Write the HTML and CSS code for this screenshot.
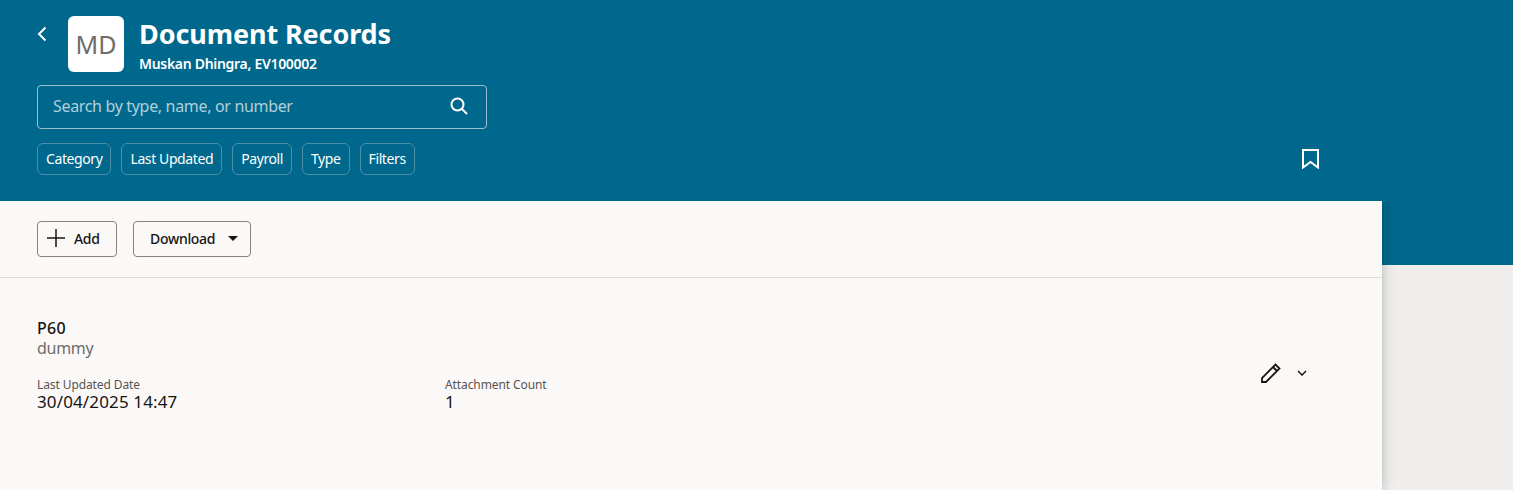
FILE: index.html
```html
<!DOCTYPE html>
<html lang="en">
<head>
    <meta charset="UTF-8">
    <meta name="viewport" content="width=device-width, initial-scale=1.0">
    <title>Document Records</title>
    <link rel="stylesheet" href="styles.css">
</head>
<body>
    <header class="banner">
        <div class="title-row">
            <button class="back" aria-label="Back">
                <svg width="10" height="16" viewBox="0 0 10 16"><path d="M8.500 1.500 2 8l6.500 6.500" fill="none" stroke="#fff" stroke-width="2"/></svg>
            </button>
            <div class="avatar">MD</div>
            <div class="title-text">
                <h1>Document Records</h1>
                <p>Muskan Dhingra, EV100002</p>
            </div>
        </div>
        <div class="search">
            <span>Search by type, name, or number</span>
            <svg width="18" height="18" viewBox="0 0 18 18"><circle cx="7.500" cy="7.500" r="6" fill="none" stroke="#fff" stroke-width="2"/><path d="m12 12 5 5" stroke="#fff" stroke-width="2"/></svg>
        </div>
        <div class="filter-row">
            <div class="chips">
                <span class="chip">Category</span>
                <span class="chip">Last Updated</span>
                <span class="chip">Payroll</span>
                <span class="chip">Type</span>
                <span class="chip">Filters</span>
            </div>
            <svg width="17" height="20" viewBox="0 0 17 20"><path d="M1 1h15v17.500L8.500 13 1 18.500z" fill="none" stroke="#fff" stroke-width="2"/></svg>
        </div>
    </header>

    <main class="card">
        <div class="toolbar">
            <button class="btn btn-add">
                <svg width="18" height="18" viewBox="0 0 18 18"><path d="M9 0v18M0 9h18" stroke="#161513" stroke-width="1.500"/></svg>
                Add
            </button>
            <button class="btn btn-download">
                Download
                <svg width="10" height="5" viewBox="0 0 10 5"><path d="M0 0h10L5 5z" fill="#161513"/></svg>
            </button>
        </div>
        <div class="record">
            <div class="record-info">
                <div class="record-name">P60</div>
                <div class="record-desc">dummy</div>
                <div class="fields">
                    <div class="field">
                        <div class="field-label">Last Updated Date</div>
                        <div class="field-value">30/04/2025 14:47</div>
                    </div>
                    <div class="field">
                        <div class="field-label">Attachment Count</div>
                        <div class="field-value">1</div>
                    </div>
                </div>
            </div>
            <div class="record-actions">
                <svg width="20" height="20" viewBox="0 0 20 20"><path d="M1 19v-4L14.500 1.500l4 4L5 19zM12 4l4 4" fill="none" stroke="#161513" stroke-width="1.800"/></svg>
                <svg width="10" height="6" viewBox="0 0 10 6"><path d="m1 1 4 4 4-4" fill="none" stroke="#161513" stroke-width="1.500"/></svg>
            </div>
        </div>
    </main>
</body>
</html>
```
FILE: styles.css
```css
html, body {
    height: 100%;
}
body {
    margin: 0;
    overflow: hidden;
    background-color: #efeeed;
    color: #161513;
    font-family: "Noto Sans", Arial, sans-serif;
}
button {
    font-family: inherit;
}
.banner {
    box-sizing: border-box;
    height: 265px;
    margin-bottom: -64px;
    padding: 16px 0 0 37px;
    background-color: #00688c;
    color: #fff;
}
.title-row {
    display: flex;
    align-items: flex-start;
}
.back {
    width: 31px;
    height: 36px;
    padding: 4px 0 0;
    border: none;
    background: none;
    text-align: left;
}
.avatar {
    display: flex;
    align-items: center;
    justify-content: center;
    width: 56px;
    height: 56px;
    border-radius: 6px;
    background-color: #fff;
    color: #6f6c69;
    font-size: 25px;
}
.title-text {
    margin-left: 15px;
}
.title-text h1 {
    margin: 0;
    font-size: 27px;
    font-weight: 700;
    line-height: 36px;
    letter-spacing: -0.1px;
}
.title-text p {
    margin: 3px 0 0;
    font-size: 14px;
    font-weight: 600;
    line-height: 18px;
    letter-spacing: -0.3px;
}
.search {
    box-sizing: border-box;
    display: flex;
    align-items: center;
    justify-content: space-between;
    width: 450px;
    height: 44px;
    margin-top: 12px;
    padding: 0 18px 2px 15px;
    border: 1px solid #9cc0cf;
    border-radius: 4px;
    color: #b3cfda;
    font-size: 16px;
    letter-spacing: -0.33px;
}
.filter-row {
    display: flex;
    align-items: center;
    justify-content: space-between;
    width: 1282px;
    margin-top: 14px;
}
.chips {
    display: flex;
    gap: 10px;
}
.chip {
    box-sizing: border-box;
    height: 32px;
    padding: 0 8px;
    border: 1px solid #4b8fa9;
    border-radius: 6px;
    font-size: 14px;
    line-height: 30px;
    letter-spacing: -0.4px;
}
.card {
    position: relative;
    box-sizing: border-box;
    width: 1382px;
    height: 289px;
    background-color: #fbf9f8;
    box-shadow: 0 0 12px rgba(0, 0, 0, 0.25);
    clip-path: inset(0 -20px 0 0);
}
.toolbar {
    display: flex;
    gap: 16px;
    height: 77px;
    padding: 20px 0 0 37px;
    box-sizing: border-box;
    border-bottom: 1px solid #dfdddb;
}
.btn {
    display: flex;
    align-items: center;
    height: 36px;
    padding: 0 0 2px;
    border: 1px solid #86837f;
    border-radius: 4px;
    background: none;
    color: #161513;
    font-size: 14px;
    font-weight: 500;
    letter-spacing: -0.3px;
}
.btn-add {
    width: 80px;
    gap: 9px;
    padding-left: 9px;
}
.btn-download {
    width: 118px;
    gap: 13px;
    padding-left: 16px;
}
.record {
    display: flex;
    align-items: center;
    justify-content: space-between;
    width: 1307px;
    padding: 40px 0 0 37px;
    box-sizing: border-box;
}
.record-name {
    font-size: 16px;
    font-weight: 500;
    line-height: 20px;
    letter-spacing: 0.3px;
}
.record-desc {
    color: #6f6c69;
    font-size: 16px;
    line-height: 20px;
    letter-spacing: -0.3px;
}
.fields {
    display: flex;
    margin-top: 19px;
}
.field {
    width: 408px;
}
.field-label {
    color: #57544f;
    font-size: 12px;
    line-height: 15px;
    letter-spacing: -0.1px;
}
.field-value {
    font-size: 17px;
    line-height: 20px;
    letter-spacing: 0.13px;
}
.record-actions {
    display: flex;
    align-items: center;
    gap: 16px;
    margin-top: 16px;
}
```
